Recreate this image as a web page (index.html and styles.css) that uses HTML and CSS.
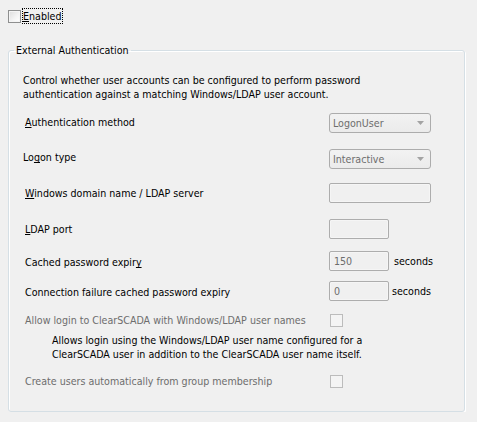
FILE: index.html
```html
<!DOCTYPE html>
<html>
<head>
<meta charset="utf-8">
<link rel="stylesheet" href="styles.css">
</head>
<body>
<div class="page">
  <div class="enable-row">
    <span class="check check-on"></span>
    <span class="focus"><u>E</u>nabled</span>
  </div>
  <fieldset class="group">
    <legend class="legend">External Authentication</legend>
    <p class="desc">Control whether user accounts can be configured to perform password<br>authentication against a matching Windows/LDAP user account.</p>
    <div class="row row-auth">
      <span class="label lbl-up1"><u>A</u>uthentication method</span>
      <div class="combo"><span class="combo-text">LogonUser</span><svg class="arrow" width="7" height="4" viewBox="0 0 7 4"><polygon points="0,0 7,0 3.5,4" fill="#a3a3a3"/></svg></div>
    </div>
    <div class="row row-logon">
      <span class="label lbl-left lbl-up2">Lo<u>g</u>on type</span>
      <div class="combo"><span class="combo-text">Interactive</span><svg class="arrow" width="7" height="4" viewBox="0 0 7 4"><polygon points="0,0 7,0 3.5,4" fill="#a3a3a3"/></svg></div>
    </div>
    <div class="row row-domain">
      <span class="label"><u>W</u>indows domain name / LDAP server</span>
      <div class="textbox wide"></div>
    </div>
    <div class="row row-port">
      <span class="label"><u>L</u>DAP port</span>
      <div class="textbox narrow"></div>
    </div>
    <div class="row row-cached">
      <span class="label lbl-down1">Cached password expir<u>y</u></span>
      <div class="textbox narrow"><span class="value">150</span></div>
      <span class="unit unit-a">seconds</span>
    </div>
    <div class="row row-conn">
      <span class="label lbl-down1">Connection failure cached password expiry</span>
      <div class="textbox narrow"><span class="value">0</span></div>
      <span class="unit unit-b">seconds</span>
    </div>
    <div class="row check-row row-allow">
      <span class="label disabled">Allow login to ClearSCADA with Windows/LDAP user names</span>
      <span class="check check-off"></span>
    </div>
    <p class="desc desc-indent">Allows login using the Windows/LDAP user name configured for a<br>ClearSCADA user in addition to the ClearSCADA user name itself.</p>
    <div class="row check-row row-create">
      <span class="label disabled">Create users automatically from group membership</span>
      <span class="check check-off"></span>
    </div>
  </fieldset>
</div>
</body>
</html>
```

FILE: styles.css
```css
html, body {
  margin: 0;
  padding: 0;
  background: #f0f0f0;
}
body {
  font-family: "DejaVu Sans Condensed", "DejaVu Sans", sans-serif;
  font-stretch: condensed;
  font-size: 10.6px;
  color: #000;
}
u {
  text-decoration: underline;
  text-decoration-skip-ink: none;
  text-underline-offset: 1px;
}
.page {
  padding: 8px 0 0 8px;
}
.enable-row {
  display: flex;
  align-items: center;
  height: 16px;
}
.check {
  display: block;
  box-sizing: border-box;
  width: 13px;
  height: 13px;
  flex: none;
}
.check-on {
  border: 1px solid #8e8f8f;
  background: linear-gradient(135deg, #dcdcdc 0%, #f4f4f4 60%, #ffffff 100%);
  box-shadow: inset 0 0 0 1px #f4f4f4;
  margin-top: 1px;
}
.check-off {
  border: 1px solid #bcbcbc;
  background: #f4f4f4;
}
.focus {
  margin-left: 1px;
  height: 16px;
  line-height: 16px;
  outline: 1px dotted #000;
  outline-offset: -1px;
  box-sizing: border-box;
  padding-left: 1px;
  padding-right: 1px;
}
.group {
  margin: 20px 0 0 0;
  width: 457px;
  height: 368px;
  box-sizing: border-box;
  border: 1px solid #d5dfe5;
  border-radius: 3px;
  box-shadow: 1px 1px 0 #fff, inset 1px 1px 0 #fff;
  padding: 0 0 0 16px;
  display: flex;
  flex-direction: column;
}
.legend {
  padding: 0 2px;
  margin-left: -11px;
  line-height: 13px;
  height: 13px;
}
.desc {
  margin: 16px 0 0 -2px;
  line-height: 14px;
}
.desc-indent {
  margin: 6px 0 0 27px;
}
.row {
  display: flex;
  align-items: center;
  height: 20px;
}
.label {
  width: 304px;
  flex: none;
  line-height: 13px;
}
.lbl-left { margin-left: -2px; margin-right: 2px; }
.lbl-up1 { position: relative; top: -1px; }
.lbl-up2 { position: relative; top: -2px; }
.lbl-down1 { position: relative; top: 1px; }
.row-auth { margin-top: 12px; }
.row-logon { margin-top: 16px; }
.row-domain { margin-top: 14px; }
.row-port { margin-top: 16px; }
.row-cached { margin-top: 12px; }
.row-conn { margin-top: 10px; }
.check-row { height: 13px; }
.check-row .check { margin-left: 1px; }
.row-allow { margin-top: 13px; }
.row-create { margin-top: 14px; }
.disabled { color: #6d6d6d; }
.combo {
  box-sizing: border-box;
  width: 102px;
  height: 20px;
  border: 1px solid #acacac;
  border-radius: 3px;
  background: linear-gradient(#f2f2f2, #ebebeb);
  display: flex;
  align-items: center;
  justify-content: space-between;
  padding: 0 6px 0 3px;
}
.combo-text { color: #6d6d6d; }
.arrow { display: block; }
.textbox {
  box-sizing: border-box;
  height: 20px;
  border: 1px solid #adadad;
  border-radius: 2px;
  background: #f0f0f0;
  box-shadow: inset 0 0 0 1px #f5f5f5;
  display: flex;
  align-items: center;
  padding-left: 4px;
}
.wide { width: 102px; }
.narrow { width: 60px; }
.value { color: #6d6d6d; }
.unit-a { margin-left: 5px; }
.unit-b { margin-left: 3px; }
```
